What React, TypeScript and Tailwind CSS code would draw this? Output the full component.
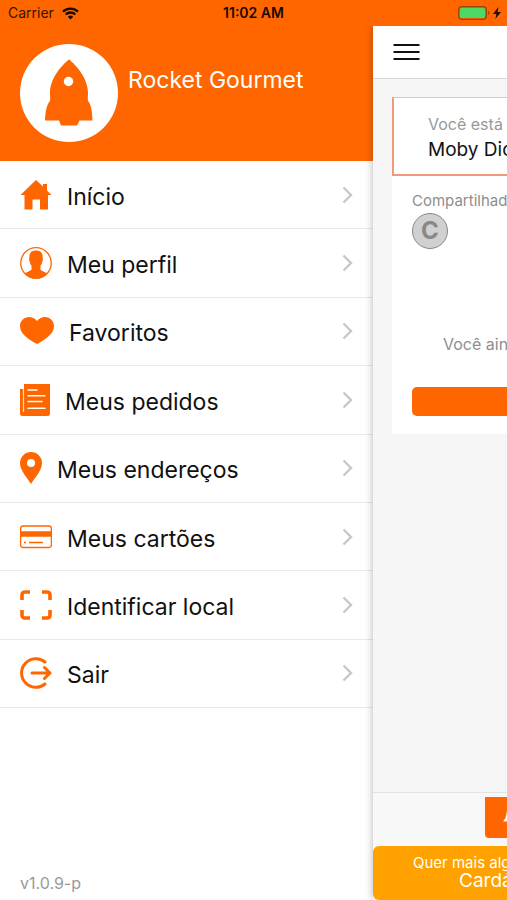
import type { ReactNode } from 'react';

const HomeIcon = () => (
  <svg width="32" height="32" viewBox="0 0 32 32" fill="currentColor" aria-hidden="true">
    <path d="M16 1 23 7.500V5h4v6.500L31.500 16H28v14.500h-8V20.500h-7.500v10H4.500V16H.5L16 1Z" />
  </svg>
);

const ProfileIcon = () => (
  <svg width="32" height="32" viewBox="0 0 32 32" fill="currentColor" aria-hidden="true">
    <circle cx="16" cy="16" r="15.3" fill="none" stroke="currentColor" strokeWidth="1.3" />
    <path d="M16 3.500c5 0 7 3 6.600 7.500.6.500.4 3.200-.6 4.200-.3 1.800-.9 2.800-1.500 3.600v4c2 1.500 4.800 2.200 6.800 3.900C24.500 30 20.500 31.500 16 31.500S7.500 30 4.700 26.700c2-1.700 4.800-2.400 6.800-3.900v-4c-.6-.8-1.200-1.800-1.500-3.600-1-1-1.200-3.700-.6-4.200C9 6.500 11 3.500 16 3.500Z" />
  </svg>
);

const HeartIcon = () => (
  <svg width="34" height="32" viewBox="0 0 34 32" fill="currentColor" aria-hidden="true">
    <path d="M17 6C19 3.500 22 2 25 2c5 0 9 4 9 9.200C34 18.500 26 24 17 29 8 24 0 18.500 0 11.200 0 6 4 2 9 2c3 0 6 1.500 8 4Z" />
  </svg>
);

const OrdersIcon = () => (
  <svg width="30" height="32" viewBox="0 0 30 32" aria-hidden="true">
    <path d="M4 0h26v29.500a2.500 2.500 0 0 1-2.500 2.500h-25A2.500 2.500 0 0 1 0 29.500V5h4Z" fill="currentColor" />
    <path d="M3.500 5v23" stroke="#ffd9bf" strokeWidth="1.200" />
    <path d="M8 6h9M8 11.700h17M8 17.600h14M8 24.200h17" stroke="#fff" strokeWidth="1.500" strokeLinecap="round" />
  </svg>
);

const PinIcon = () => (
  <svg width="22" height="32" viewBox="0 0 22 32" aria-hidden="true">
    <path d="M11 0a11 11 0 0 1 11 11c0 8-7.500 15-11 21C7.500 26 0 19 0 11A11 11 0 0 1 11 0Z" fill="currentColor" />
    <circle cx="11" cy="11" r="4" fill="#fff" />
  </svg>
);

const CardIcon = () => (
  <svg width="32" height="32" viewBox="0 0 32 32" fill="none" stroke="currentColor" aria-hidden="true">
    <rect x="0.600" y="5" width="30.800" height="21.500" rx="2.500" strokeWidth="1.300" />
    <path d="M1 13h30" strokeWidth="5.500" />
    <path d="M4 21.500h2M9 21.500h14" strokeWidth="1.300" />
  </svg>
);

const ScanIcon = () => (
  <svg width="32" height="32" viewBox="0 0 32 32" fill="none" stroke="currentColor" strokeWidth="3.600" aria-hidden="true">
    <path d="M2 11V6q0-3 3-3h5M22 3h5q3 0 3 3v5M30 21v5q0 3-3 3h-5M10 29H5q-3 0-3-3v-5" />
  </svg>
);

const ExitIcon = () => (
  <svg width="32" height="32" viewBox="0 0 32 32" fill="none" stroke="currentColor" strokeWidth="3" strokeLinecap="round" aria-hidden="true">
    <path d="M25 5A14.300 14.300 0 1 0 25 27M12 16h18M24.500 10.500 30 16l-5.500 5.500" />
  </svg>
);

const menuItems: { label: string; icon: ReactNode }[] = [
  { label: 'Início', icon: <HomeIcon /> },
  { label: 'Meu perfil', icon: <ProfileIcon /> },
  { label: 'Favoritos', icon: <HeartIcon /> },
  { label: 'Meus pedidos', icon: <OrdersIcon /> },
  { label: 'Meus endereços', icon: <PinIcon /> },
  { label: 'Meus cartões', icon: <CardIcon /> },
  { label: 'Identificar local', icon: <ScanIcon /> },
  { label: 'Sair', icon: <ExitIcon /> },
];

function StatusBar() {
  return (
    <div className="grid h-[26px] grid-cols-3 items-center bg-[#ff6600] px-[6px] text-sm text-[#331400]">
      <div className="flex items-center gap-2 pl-[2px]">
        <span>Carrier</span>
        <svg width="17" height="13" viewBox="0 0 17 13" fill="none" stroke="#1a0a00" strokeWidth="2.400" aria-label="Wi-Fi">
          <path d="M1 4.700a10.800 10.800 0 0 1 15 0M3.700 7.500a6.900 6.900 0 0 1 9.600 0" />
          <path d="M8.500 12.500 5.800 9.700a3.900 3.900 0 0 1 5.400 0Z" fill="#1a0a00" stroke="none" />
        </svg>
      </div>
      <span className="text-center font-semibold whitespace-nowrap text-[#1a0a00]">11:02 AM</span>
      <div className="flex items-center justify-end gap-[3px]">
        <svg width="32" height="14" viewBox="0 0 32 14" aria-label="Battery">
          <rect x="0.700" y="0.700" width="27.600" height="12.600" rx="3" fill="none" stroke="#a34100" strokeWidth="1.300" />
          <rect x="2" y="2" width="25" height="10" rx="1.500" fill="#4cd964" />
          <path d="M30 5v4q1.500-.5 1.500-2T30 5Z" fill="#a34100" />
        </svg>
        <svg width="8" height="12" viewBox="0 0 8 12" fill="#1a0a00" aria-label="Charging">
          <path d="M5.500 0 0 7h3.500L2.300 12 8 5H4.500Z" />
        </svg>
      </div>
    </div>
  );
}

function Drawer() {
  return (
    <aside className="flex min-w-0 flex-1 flex-col bg-white">
      <div className="flex h-[135px] gap-[10px] bg-[#ff6600] px-5 pt-[18px]">
        <svg width="98" height="98" viewBox="0 0 98 98" aria-hidden="true">
          <circle cx="49" cy="49" r="49" fill="#fff" />
          <path d="M49 15.500C42 21 30 34 30 49c0 4 .5 5.500 0 8-3.500 4-4.500 10-5 19.500h14L41 81.500h16l2.500-5H72.500C72 67 71.500 61 68 57c-.5-2.500 0-4 0-8C68 34 56 21 49 15.500Z" fill="#ff6600" />
          <circle cx="48.500" cy="37.500" r="4.700" fill="#fff" />
        </svg>
        <h1 className="pt-5 text-[23px] leading-8 whitespace-nowrap text-white">Rocket Gourmet</h1>
      </div>

      <nav>
        <ul className="grid h-[547px] grid-rows-8">
          {menuItems.map((item) => (
            <li key={item.label} className="border-b border-[#e9e9e9]">
              <a href="#" className="flex h-full items-center gap-[15px] px-5 text-[#ff6600]">
                {item.icon}
                <span className="flex-1 pt-1 text-[23px] leading-8 whitespace-nowrap text-[#111]">{item.label}</span>
                <svg width="11" height="18" viewBox="0 0 11 18" fill="none" stroke="#c7c7cc" strokeWidth="2.400" aria-hidden="true">
                  <path d="m1.500 1.500 7.500 7.500-7.500 7.500" />
                </svg>
              </a>
            </li>
          ))}
        </ul>
      </nav>

      <p className="mt-auto px-5 pb-[5px] text-base text-[#999]">v1.0.9-p</p>
    </aside>
  );
}

function Page() {
  return (
    <main className="z-10 flex w-[134px] shrink-0 flex-col overflow-hidden bg-[#f6f6f6] whitespace-nowrap shadow-[0_0_8px_rgba(0,0,0,0.3)] [clip-path:inset(0_0_0_-12px)]">
      <header className="flex h-[53px] items-center border-b border-[#d8d8d8] bg-white px-5">
        <button type="button" aria-label="Menu">
          <svg width="27" height="16" viewBox="0 0 27 16" stroke="#111" strokeWidth="2" aria-hidden="true">
            <path d="M0.500 1h26M0.500 8h26M0.500 15h26" />
          </svg>
        </button>
      </header>

      <section className="mt-[18px] ml-[19px] h-[337px] bg-white">
        <div className="h-[79px] border-t border-b-2 border-l-2 border-t-[#ccc] border-b-[#f09a7c] border-l-[#f09a7c] pt-[14px] pl-[34px]">
          <p className="text-base leading-6 text-[#999]">Você está em</p>
          <p className="text-[19px] leading-7 text-[#111]">Moby Dick</p>
        </div>
        <div className="pt-[13px] pl-5">
          <p className="text-[15px] leading-6 text-[#8e8e8e]">Compartilhado com</p>
          <div className="flex size-9 items-center justify-center rounded-full border border-[#888] bg-[#d0d0d0] text-2xl font-bold text-[#888]">C</div>
          <p className="pt-[83px] pl-[31px] text-base leading-6 text-[#8e8e8e]">Você ainda não pediu</p>
          <button type="button" aria-label="Pedir" className="mt-[31px] block h-[29px] w-full rounded-l-[5px] bg-[#ff6600]" />
        </div>
      </section>

      <footer className="mt-auto border-t border-[#e2e2e2] bg-[#f8f8f8] pt-1">
        <button type="button" className="ml-[112px] flex h-[41px] w-[22px] justify-end overflow-hidden rounded-bl-[4px] bg-[#ff6600] pt-[14px]" aria-label="Chamar">
          <svg width="4" height="12" viewBox="0 0 4 12" fill="#fff" aria-hidden="true">
            <path d="M4 0 2.500 7 0 10.500h4Z" />
          </svg>
        </button>
        <button type="button" className="mt-2 block h-[54px] w-full overflow-hidden rounded-l-[6px] bg-[#ffa200] text-left text-white">
          <span className="block pl-10 text-[15px] leading-4">Quer mais algo?</span>
          <span className="block pl-[86px] text-[19px] leading-5">Cardápio</span>
        </button>
      </footer>
    </main>
  );
}

export default function App() {
  return (
    <div className="flex min-h-screen flex-col overflow-hidden bg-white font-[Inter,'Liberation_Sans',sans-serif]">
      <StatusBar />
      <div className="flex flex-1">
        <Drawer />
        <Page />
      </div>
    </div>
  );
}
